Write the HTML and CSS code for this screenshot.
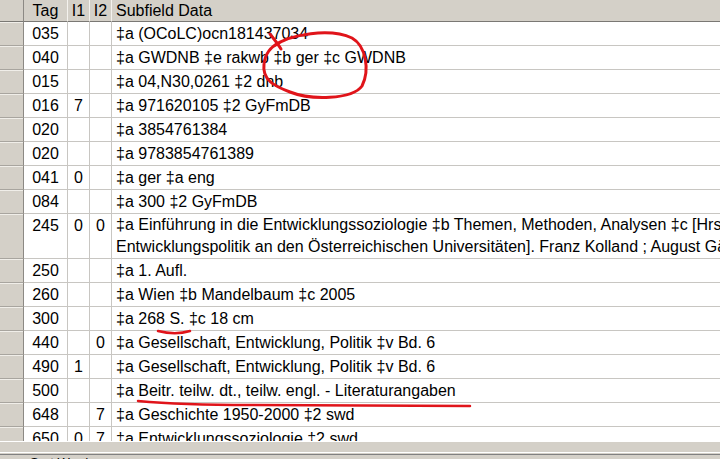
FILE: index.html
```html
<!DOCTYPE html>
<html lang="de">
	<head>
		<meta charset="utf-8">
		<title>MARC Record Editor</title>
		<link rel="stylesheet" href="styles.css">
	</head>
	<body>
		<div class="editor">
			<div class="grid">
				<table class="marc">
					<thead>
						<tr>
							<th class="rh"></th>
							<th class="tag">Tag</th>
							<th class="ind">I1</th>
							<th class="ind">I2</th>
							<th class="data">Subfield Data</th>
						</tr>
					</thead>
					<tbody>
						<tr><td class="rh"></td><td class="tag">035</td><td class="ind"></td><td class="ind"></td><td class="data">‡a (OCoLC)ocn181437034</td></tr>
						<tr><td class="rh"></td><td class="tag">040</td><td class="ind"></td><td class="ind"></td><td class="data">‡a GWDNB ‡e rakwb ‡b ger ‡c GWDNB</td></tr>
						<tr><td class="rh"></td><td class="tag">015</td><td class="ind"></td><td class="ind"></td><td class="data">‡a 04,N30,0261 ‡2 dnb</td></tr>
						<tr><td class="rh"></td><td class="tag">016</td><td class="ind">7</td><td class="ind"></td><td class="data">‡a 971620105 ‡2 GyFmDB</td></tr>
						<tr><td class="rh"></td><td class="tag">020</td><td class="ind"></td><td class="ind"></td><td class="data">‡a 3854761384</td></tr>
						<tr><td class="rh"></td><td class="tag">020</td><td class="ind"></td><td class="ind"></td><td class="data">‡a 9783854761389</td></tr>
						<tr><td class="rh"></td><td class="tag">041</td><td class="ind">0</td><td class="ind"></td><td class="data">‡a ger ‡a eng</td></tr>
						<tr><td class="rh"></td><td class="tag">084</td><td class="ind"></td><td class="ind"></td><td class="data">‡a 300 ‡2 GyFmDB</td></tr>
						<tr class="tall"><td class="rh"></td><td class="tag">245</td><td class="ind">0</td><td class="ind">0</td><td class="data">‡a Einführung in die Entwicklungssoziologie ‡b Themen, Methoden, Analysen ‡c [Hrsg.: Mattersburger Kreis für<br>Entwicklungspolitik an den Österreichischen Universitäten]. Franz Kolland ; August Gächter ...</td></tr>
						<tr><td class="rh"></td><td class="tag">250</td><td class="ind"></td><td class="ind"></td><td class="data">‡a 1. Aufl.</td></tr>
						<tr><td class="rh"></td><td class="tag">260</td><td class="ind"></td><td class="ind"></td><td class="data">‡a Wien ‡b Mandelbaum ‡c 2005</td></tr>
						<tr><td class="rh"></td><td class="tag">300</td><td class="ind"></td><td class="ind"></td><td class="data">‡a 268 S. ‡c 18 cm</td></tr>
						<tr><td class="rh"></td><td class="tag">440</td><td class="ind"></td><td class="ind">0</td><td class="data">‡a Gesellschaft, Entwicklung, Politik ‡v Bd. 6</td></tr>
						<tr><td class="rh"></td><td class="tag">490</td><td class="ind">1</td><td class="ind"></td><td class="data">‡a Gesellschaft, Entwicklung, Politik ‡v Bd. 6</td></tr>
						<tr><td class="rh"></td><td class="tag">500</td><td class="ind"></td><td class="ind"></td><td class="data">‡a Beitr. teilw. dt., teilw. engl. - Literaturangaben</td></tr>
						<tr><td class="rh"></td><td class="tag">648</td><td class="ind"></td><td class="ind">7</td><td class="data">‡a Geschichte 1950-2000 ‡2 swd</td></tr>
						<tr><td class="rh"></td><td class="tag">650</td><td class="ind">0</td><td class="ind">7</td><td class="data">‡a Entwicklungssoziologie ‡2 swd</td></tr>
					</tbody>
				</table>
			</div><!-- /grid -->
			<div class="hscroll"></div>
			<div class="status">Sort Words</div>

			<!-- red pen marks drawn over the grid -->
			<svg class="marks" width="720" height="459" viewBox="0 0 720 459">
				<path d="M270 34 C274 39 278 44 281 49" />
				<path d="M274 46 C290 34 330 28 352 38 C366 46 370 70 362 86 C352 100 310 100 290 92 C274 86 262 80 264 64 C265 54 270 47 280 42" />
				<path class="thin" d="M158 331 C170 334 180 334 190 331" />
				<path class="thin" d="M138 401 C160 403 200 405 250 405 L470 406" />
			</svg>
		</div><!-- /editor -->
	</body>
</html>
```

FILE: styles.css
```css
*, *:after, *:before { box-sizing: border-box; }

html, body {
	margin: 0;
	padding: 0;
	background: #fff;
}

body {
	width: 720px;
	height: 459px;
	overflow: hidden;
	font-family: 'Liberation Sans', Arial, sans-serif;
	font-size: 16px;
	color: #000;
}

.editor {
	position: relative;
	width: 720px;
	height: 459px;
	background: #d4d0c8;
}

/*************************************
Grid
**************************************/

.grid {
	height: 442px;
	overflow: hidden;
	background: #fff;
	border-bottom: 1px solid #fff;
}

.marc {
	border-collapse: separate;
	border-spacing: 0;
	width: 1400px;
	table-layout: fixed;
	white-space: nowrap;
}

.marc th,
.marc td {
	padding: 0;
	font-weight: normal;
	vertical-align: top;
	overflow: hidden;
}

.marc th {
	height: 22px;
	line-height: 21px;
	background: #d4d0c8;
	border-bottom: 1px solid #7a7874;
	border-right: 1px solid #f4f2ee;
}

.marc td {
	height: 24px;
	line-height: 23px;
	border-bottom: 1px solid #c8c6c2;
	border-right: 1px solid #c8c6c2;
}

.marc .rh {
	width: 24px;
	background: #d4d0c8;
	border-right: 1px solid #8c8984;
}

.marc td.rh {
	border-bottom: 1px solid #a8a59f;
	box-shadow: inset 0 1px 0 #f0eee9;
}

.marc .tag {
	width: 44px;
	text-align: center;
}

.marc .ind {
	width: 22px;
	text-align: center;
}

.marc .data {
	text-align: left;
	padding-left: 4px;
	border-right: none;
}

.marc tr.tall td {
	height: 45px;
}

.marc tr.tall td.data {
	line-height: 22px;
}

/*************************************
Scroll bar and status line
**************************************/

.hscroll {
	height: 11px;
	background: #d4d0c8;
	border-bottom: 1px solid #fff;
}

.status {
	margin-top: 1px;
	border-top: 1px solid #808080;
	padding: 0 0 0 30px;
	line-height: 16px;
	font-size: 13px;
	color: #000;
}

/*************************************
Pen marks
**************************************/

.marks {
	position: absolute;
	left: 0;
	top: 0;
	pointer-events: none;
}

.marks path {
	fill: none;
	stroke: #e0141a;
	stroke-width: 3;
	stroke-linecap: round;
	stroke-linejoin: round;
}

.marks path.thin {
	stroke-width: 2.5;
}
```
